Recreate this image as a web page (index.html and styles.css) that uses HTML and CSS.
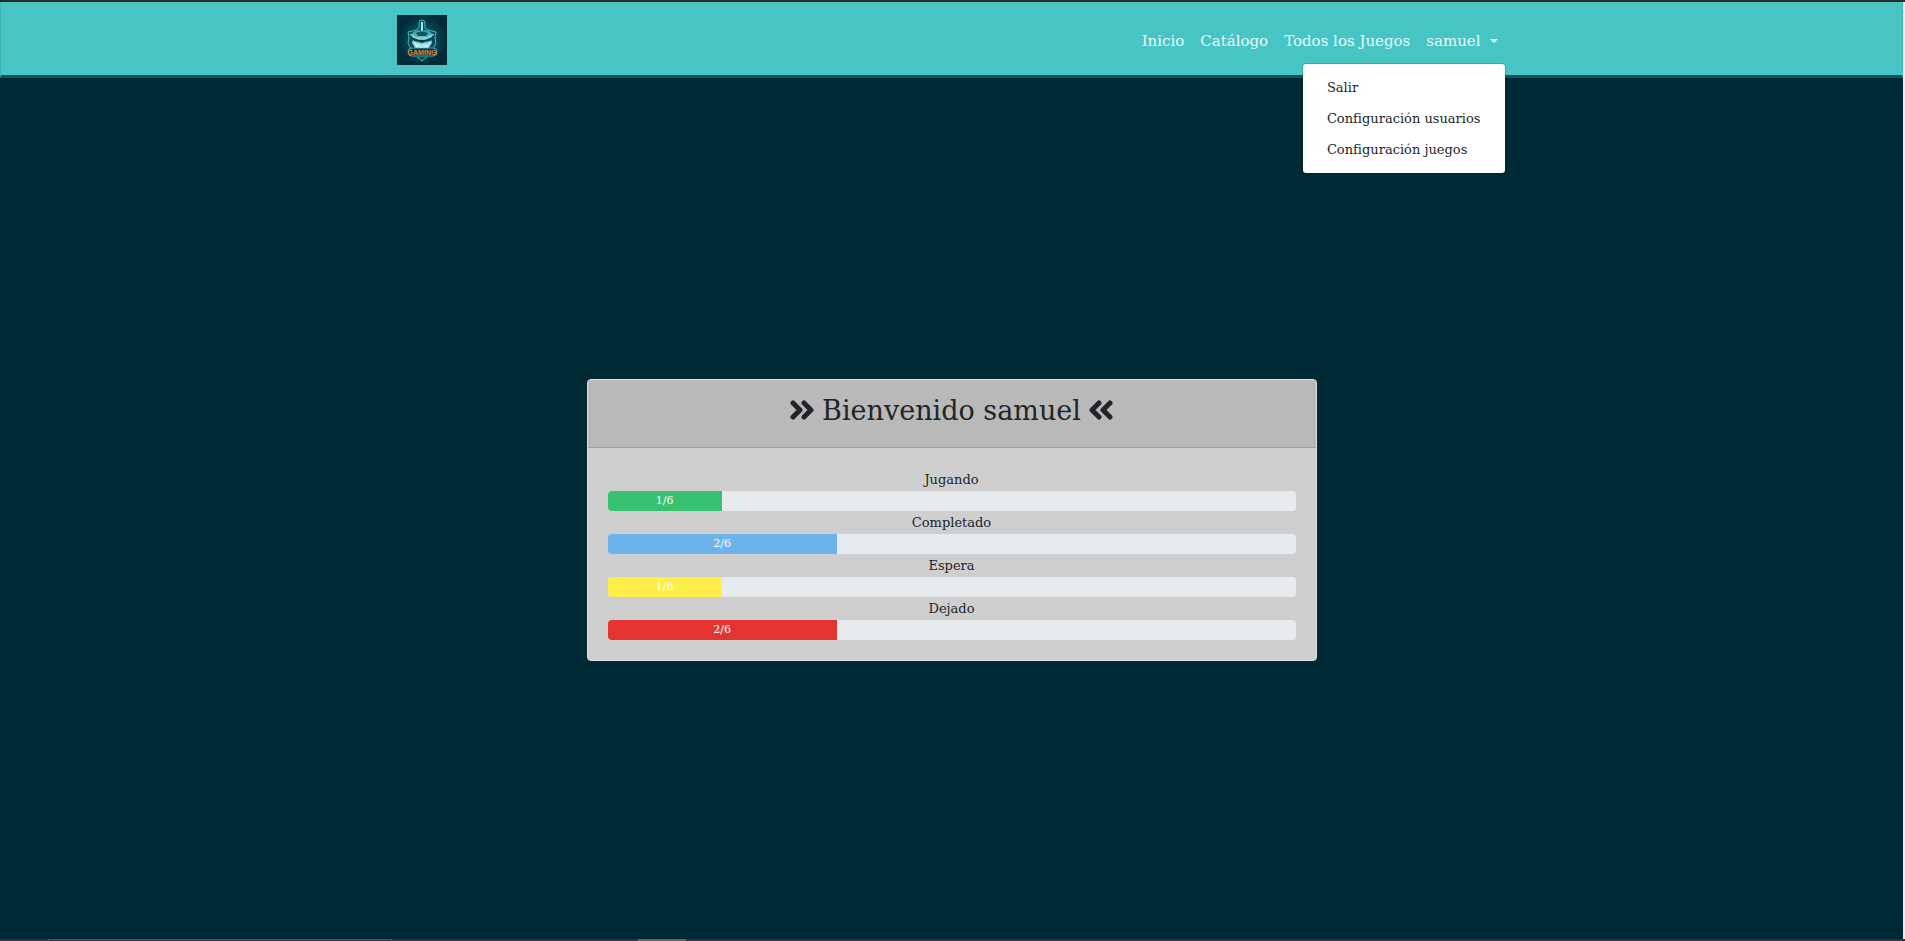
FILE: index.html
```html
<!DOCTYPE html>
<html lang="es">
<head>
<meta charset="utf-8">
<meta name="viewport" content="width=device-width, initial-scale=1">
<title>Gaming</title>
<link rel="stylesheet" href="styles.css">
</head>
<body>
<div class="edge edge-top"></div>
<div class="page">
  <header class="navbar">
    <div class="container">
      <a class="brand" href="#" aria-label="Gaming">
        <svg class="logo" viewBox="0 0 50 50" aria-hidden="true">
          <defs>
            <radialGradient id="glow"><stop offset="0" stop-color="#0d6a76"/><stop offset=".6" stop-color="#06414f"/><stop offset="1" stop-color="#022a38"/></radialGradient>
            <linearGradient id="steel" x1="0" y1="0" x2="0" y2="1"><stop offset="0" stop-color="#2f9aa5"/><stop offset="1" stop-color="#a5eff0"/></linearGradient>
          </defs>
          <rect width="50" height="50" fill="#022a38"/>
          <circle cx="25" cy="25" r="25" fill="url(#glow)"/>
          <path d="M11 17l8-2 3-2V8q0-3 3-3t3 3v5l3 2 8 2-1 6 1 5-3 6H14l-3-6 1-5z" fill="#0b4957" stroke="#3cc0c1"/>
          <path d="M14 20q3-5 9-5h4q6 0 9 5l-2 4 1 4-4 6H19l-4-6 1-4z" fill="url(#steel)"/>
          <path d="M19 18q6-3 12 0l-2 3h-8z" fill="#0d5361"/>
          <path d="M14 22l8 3h6l8-3-3 4-5 1-3 1-3-1-5-1z" fill="#0a3947"/>
          <path d="M13 19l7 4h10l7-4" fill="none" stroke="#9beaea"/>
          <path d="M25 7v9" stroke="#0a4b58" stroke-width="4"/>
          <path d="M25 7v9" stroke="#9beeee" stroke-width="2"/>
          <path d="M17 27l4 5m12-5l-4 5" stroke="#e3ffff"/>
          <circle cx="19" cy="21" r="1" fill="#e77a32"/>
          <path d="M20 42l5 4 5-4" fill="#0b4957" stroke="#3cc0c1"/>
          <rect x="11" y="33" width="29" height="8" rx="4" fill="#073645" stroke="#2bb3b5"/>
          <text class="logo-play" x="25" y="33" text-anchor="middle">PLAY</text>
          <text class="logo-name" x="25" y="40" text-anchor="middle">GAMING</text>
        </svg>
      </a>
      <nav class="nav">
        <a href="#">Inicio</a>
        <a href="#">Catálogo</a>
        <a href="#">Todos los Juegos</a>
        <div class="dropdown">
          <button class="toggle" type="button" aria-expanded="true" aria-controls="user-menu">samuel<span class="caret"></span></button>
          <div class="menu" id="user-menu">
            <a href="#">Salir</a>
            <a href="#">Configuración usuarios</a>
            <a href="#">Configuración juegos</a>
          </div>
        </div>
      </nav>
    </div>
  </header>
  <main class="main">
    <section class="card">
      <div class="card-header">
        <h1>
          <svg class="angles" viewBox="0 0 24 20" aria-hidden="true"><path d="M3 3l7 7-7 7M14 3l7 7-7 7"/></svg>
          <span>Bienvenido samuel</span>
          <svg class="angles" viewBox="0 0 24 20" aria-hidden="true"><path d="M10 3l-7 7 7 7M21 3l-7 7 7 7"/></svg>
        </h1>
      </div>
      <div class="card-body">
        <div class="label">Jugando</div>
        <div class="progress"><div class="bar green" style="width:16.6%">1/6</div></div>
        <div class="label">Completado</div>
        <div class="progress"><div class="bar blue" style="width:33.3%">2/6</div></div>
        <div class="label">Espera</div>
        <div class="progress"><div class="bar yellow" style="width:16.6%">1/6</div></div>
        <div class="label">Dejado</div>
        <div class="progress"><div class="bar red" style="width:33.3%">2/6</div></div>
      </div>
    </section>
  </main>
</div>
<div class="edge edge-bottom"><span class="tab"></span><span class="thumb"></span></div>
</body>
</html>
```
FILE: styles.css
```css
* { box-sizing: border-box; }

body {
  margin: 0;
  min-height: 100vh;
  display: flex;
  flex-direction: column;
  background: #002936;
  color: #212529;
  font-family: "Roboto Slab", "DejaVu Serif", serif;
  font-size: 13px;
}

a { text-decoration: none; color: inherit; }

.edge { height: 2px; background: #2b2b2b; }
.edge-bottom { display: flex; background: #34343a; }
.tab { width: 344px; margin-left: 48px; border: 1px solid #4d5757; border-bottom: 0; }
.thumb { width: 48px; margin-left: 246px; background: #666; }

.page {
  flex: 1;
  display: flex;
  flex-direction: column;
  border-right: 2px solid #ececec;
}

.navbar {
  padding: 13px 0 10px;
  background: #48c4c4;
  border: 1px solid #3fb3b5;
  border-width: 0 1px;
  border-bottom: 3px solid #17525e;
}

.container {
  display: flex;
  align-items: center;
  justify-content: space-between;
  max-width: 1140px;
  margin: 0 auto;
  padding: 0 16px 0 15px;
}

.brand, .logo { display: block; width: 50px; height: 50px; }
.logo text { font-family: "Liberation Sans", sans-serif; font-weight: bold; }
.logo-play { font-size: 5px; fill: #c9ffff; }
.logo-name { font-size: 7px; fill: #ee7a2d; }

.nav { display: flex; font-size: 15px; line-height: 24px; color: #e8fbfa; }
.nav > a, .toggle { padding: 9px 8px 7px; }
.dropdown { position: relative; }
.toggle {
  display: flex;
  align-items: center;
  gap: 9px;
  border: 0;
  background: none;
  color: inherit;
  font: inherit;
}
.caret { border: 4px solid transparent; border-top-color: currentColor; border-bottom: 0; }
.menu {
  position: absolute;
  top: 100%;
  right: 0;
  margin-top: 3px;
  padding: 8px 0;
  background: #fff;
  background-clip: padding-box;
  border: 1px solid rgba(0, 0, 0, .15);
  border-radius: 4px;
  color: #212529;
  font-size: 13px;
}
.menu a { display: block; padding: 4px 24px; line-height: 23px; white-space: nowrap; }

.main {
  flex: 1;
  display: flex;
  align-items: center;
  justify-content: center;
  padding: 22px 15px 0;
}

.card {
  width: 100%;
  max-width: 730px;
  background: #cecece;
  border: 1px solid #dde3e5;
  border-radius: 4px;
  text-align: center;
}
.card-header { padding: 13px 20px 19px; background: #b9b9b9; border-bottom: 1px solid #a0a0a0; border-radius: 3px 3px 0 0; }
h1 {
  display: flex;
  align-items: center;
  justify-content: center;
  gap: 8px;
  margin: 0;
  font-size: 27px;
  font-weight: 400;
  line-height: 35px;
}
.angles { width: 24px; height: 20px; fill: none; stroke: currentColor; stroke-width: 5; stroke-linecap: round; stroke-linejoin: round; }
.card-body { padding: 20px; }
.label { line-height: 23px; }
.progress { display: flex; height: 20px; overflow: hidden; background: #e8ebee; border-radius: 4px; }
.bar { color: #fff; font-size: 11px; line-height: 19px; }
.green { background: #38c172; }
.blue { background: #6cb2eb; }
.yellow { background: #ffed4a; }
.red { background: #e3342f; }
```
